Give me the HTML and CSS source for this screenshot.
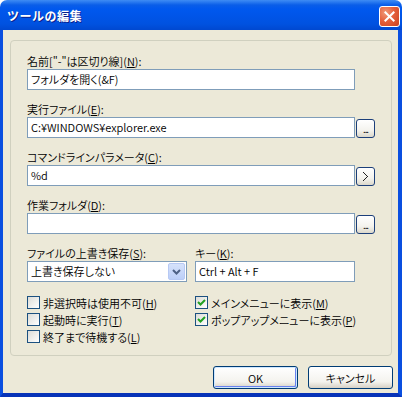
FILE: index.html
```html
<!DOCTYPE html>
<html lang="ja">
<head>
<meta charset="utf-8">
<title>ツールの編集</title>
<link rel="stylesheet" href="styles.css">
</head>
<body>
<div class="window">
  <div class="titlebar">
    <span class="title">ツールの編集</span>
    <span class="close" aria-label="閉じる">
      <svg width="21" height="21" viewBox="0 0 21 21">
        <path d="M6 6 L15 15 M15 6 L6 15" stroke="#fff" stroke-width="2.2" stroke-linecap="square" fill="none"/>
      </svg>
    </span>
  </div>
  <div class="client">
    <div class="group">
      <div class="field">
        <div class="label">名前["-"は区切り線](<u>N</u>):</div>
        <div class="row"><div class="input">フォルダを開く(&amp;F)</div></div>
      </div>
      <div class="field">
        <div class="label">実行ファイル(<u>E</u>):</div>
        <div class="row"><div class="input">C:¥WINDOWS¥explorer.exe</div><span class="smallbtn">...</span></div>
      </div>
      <div class="field">
        <div class="label">コマンドラインパラメータ(<u>C</u>):</div>
        <div class="row"><div class="input">%d</div><span class="smallbtn arrow"><svg width="8" height="9" viewBox="0 0 8 9"><path d="M1 0h1v1h1v1h1v1h1v1h1v1h-1v1h-1v1h-1v1h-1v1h-1v-1h1v-1h1v-1h1v-1h1v-1h-1v-1h-1v-1h-1v-1h-1z" fill="#222"/></svg></span></div>
      </div>
      <div class="field">
        <div class="label">作業フォルダ(<u>D</u>):</div>
        <div class="row"><div class="input"></div><span class="smallbtn">...</span></div>
      </div>
      <div class="field split">
        <div class="col">
          <div class="label">ファイルの上書き保存(<u>S</u>):</div>
          <div class="combo"><span class="combotext">上書き保存しない</span><span class="dropbtn"><svg width="9" height="6" viewBox="0 0 9 6"><path d="M1 1 L4.5 4.5 L8 1" stroke="#4d6185" stroke-width="2" fill="none"/></svg></span></div>
        </div>
        <div class="col">
          <div class="label">キー(<u>K</u>):</div>
          <div class="input key">Ctrl + Alt + F</div>
        </div>
      </div>
      <div class="checks">
        <div class="checkcol">
          <div class="check"><span class="box"></span>非選択時は使用不可(<u>H</u>)</div>
          <div class="check"><span class="box"></span>起動時に実行(<u>T</u>)</div>
          <div class="check"><span class="box"></span>終了まで待機する(<u>L</u>)</div>
        </div>
        <div class="checkcol">
          <div class="check"><span class="box checked"><svg width="11" height="11" viewBox="0 0 11 11"><path d="M2 5 L4.5 7.5 L9 3" stroke="#21a121" stroke-width="2" fill="none"/></svg></span>メインメニューに表示(<u>M</u>)</div>
          <div class="check"><span class="box checked"><svg width="11" height="11" viewBox="0 0 11 11"><path d="M2 5 L4.5 7.5 L9 3" stroke="#21a121" stroke-width="2" fill="none"/></svg></span>ポップアップメニューに表示(<u>P</u>)</div>
        </div>
      </div>
    </div>
    <div class="buttons">
      <span class="btn default">OK</span>
      <span class="btn">キャンセル</span>
    </div>
  </div>
</div>
</body>
</html>
```

FILE: styles.css
```css
html, body {
  margin: 0;
  padding: 0;
  background: #ffffff;
}
body {
  font-family: "Noto Sans CJK JP", sans-serif;
  font-size: 11px;
  font-weight: 350;
  font-feature-settings: "palt" 1;
  color: #000;
}
.window {
  width: 402px;
  height: 397px;
  display: flex;
  flex-direction: column;
  border-radius: 7px 7px 0 0;
  overflow: hidden;
}
.titlebar {
  height: 30px;
  flex: none;
  display: flex;
  align-items: center;
  justify-content: space-between;
  padding: 0 2px 0 7px;
  background: linear-gradient(#3f8cf3 0, #2a7af0 2px, #0a5ee8 5px, #0058ee 9px, #0055e9 50%, #0052e0 80%, #0048d0 100%);
}
.title {
  color: #fff;
  font-feature-settings: normal;
  font-weight: bold;
  font-size: 12px;
  letter-spacing: 0.5px;
  text-shadow: 1px 1px 0 #0a1e8c;
  margin-top: 1px;
}
.close {
  width: 19px;
  height: 19px;
  border: 1px solid #fff;
  border-radius: 3px;
  background: radial-gradient(circle at 30% 30%, #f09a7a 0, #e5603c 45%, #c9401e 100%);
  display: flex;
  align-items: center;
  justify-content: center;
  margin-top: 2px;
}
.close svg {
  width: 19px;
  height: 19px;
}
.client {
  flex: 1;
  background: #ece9d8;
  border-left: 3px solid #0a4fe0;
  border-right: 4px solid #0a4fe0;
  border-bottom: 4px solid #0733b8;
  display: flex;
  flex-direction: column;
}
.group {
  margin: 10px 6px 0 7px;
  border: 1px solid #d0d0bf;
  border-radius: 4px;
  padding: 13px 16px 14px 16px;
  height: 316px;
  box-sizing: border-box;
}
.field {
  margin-bottom: 12px;
}
.label {
  height: 14px;
  line-height: 14px;
  margin-bottom: 1px;
  white-space: nowrap;
}
.row {
  display: flex;
  align-items: flex-end;
}
.input {
  width: 328px;
  height: 21px;
  box-sizing: border-box;
  border: 1px solid #7f9db9;
  background: #fff;
  padding: 0 3px;
  line-height: 19px;
  white-space: nowrap;
  flex: none;
}
.smallbtn {
  width: 20px;
  height: 19px;
  box-sizing: border-box;
  margin-left: 1px;
  border: 1px solid #1c3f7a;
  border-radius: 3px;
  background: linear-gradient(#ffffff, #f4f3ee 60%, #dcd8cb);
  display: flex;
  align-items: flex-end;
  justify-content: center;
  font-size: 10px;
  line-height: 10px;
  padding-bottom: 3px;
  letter-spacing: -1px;
}
.smallbtn.arrow {
  align-items: center;
  padding-bottom: 0;
}
.split {
  display: flex;
  gap: 8px;
}
.col {
  display: flex;
  flex-direction: column;
}
.combo {
  width: 160px;
  height: 21px;
  box-sizing: border-box;
  border: 1px solid #7f9db9;
  background: #fff;
  display: flex;
  align-items: center;
  justify-content: space-between;
  padding: 0 1px 0 3px;
}
.combotext {
  line-height: 19px;
}
.dropbtn {
  width: 17px;
  height: 17px;
  box-sizing: border-box;
  border-radius: 2px;
  background: linear-gradient(#d6e2fb, #bccff8);
  border: 1px solid #b7c9f4;
  display: flex;
  align-items: center;
  justify-content: center;
}
.input.key {
  width: 160px;
}
.checks {
  display: flex;
  margin-top: 11px;
}
.checkcol {
  width: 168px;
  display: flex;
  flex-direction: column;
}
.check {
  height: 17px;
  display: flex;
  align-items: center;
  white-space: nowrap;
}
.box {
  width: 13px;
  height: 13px;
  box-sizing: border-box;
  border: 1px solid #1c5180;
  background: linear-gradient(135deg, #dcdcd7, #ffffff);
  margin-right: 3px;
  flex: none;
  display: flex;
  align-items: center;
  justify-content: center;
}
.box svg {
  width: 11px;
  height: 11px;
}
.buttons {
  display: flex;
  justify-content: flex-end;
  gap: 10px;
  padding: 10px 5px 0 0;
}
.btn {
  width: 85px;
  height: 23px;
  box-sizing: border-box;
  border: 1px solid #003c74;
  border-radius: 3px;
  background: linear-gradient(#ffffff, #f4f3ee 70%, #d6d0c5);
  display: flex;
  align-items: center;
  justify-content: center;
}
.btn.default {
  box-shadow: inset 0 0 0 1px #cee7ff, inset -1px -1px 0 1px #6982ee;
}
```
